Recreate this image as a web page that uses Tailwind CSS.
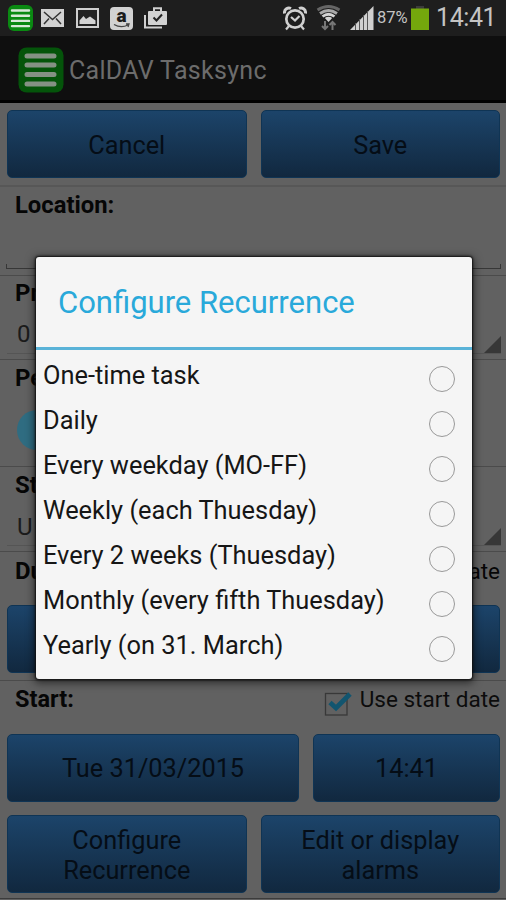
<!DOCTYPE html>
<html lang="en">
<head>
<meta charset="utf-8">
<title>CalDAV Tasksync</title>
<script src="https://cdn.jsdelivr.net/npm/@tailwindcss/browser@4"></script>
</head>
<body class="relative w-[506px] h-[900px] overflow-hidden bg-[#616161] font-['Roboto',sans-serif] text-[25.3px] text-[#060606]">
<div class="flex h-full flex-col">
  <!-- status bar -->
  <header class="flex h-9 shrink-0 items-center bg-[#1e1e1e] pl-2 pr-[10px] text-[#c4c4c4]">
    <svg class="h-[26px] w-[25px] shrink-0" viewBox="0 0 25 26"><rect width="25" height="26" rx="6" fill="#0a8a12"/><path d="M4 5.5H21M4 10.7H21M4 15.9H21M4 21.1H21" stroke="#d8e8d8" stroke-width="2.4" stroke-linecap="round"/></svg>
    <svg class="ml-2 h-[18px] w-[23px] shrink-0" viewBox="0 0 23 18"><rect width="23" height="18" fill="#d2d2d2"/><path d="M3 3L11.5 10.5L20 3M3 15L8 9.5M20 15L15 9.5" fill="none" stroke="#333" stroke-width="1.5"/></svg>
    <svg class="ml-3 h-5 w-[23px] shrink-0" viewBox="0 0 23 20"><rect x="1" y="1" width="21" height="18" fill="#222" stroke="#cfcfcf" stroke-width="2"/><path d="M3.500 16V12.500L7.500 8L10 11L14 8.500L19.500 12.500V16Z" fill="#d2d2d2"/></svg>
    <div class="relative ml-[11px] flex h-[23px] w-[23px] shrink-0 justify-center rounded-[4px] bg-[#d2d2d2]"><span class="text-[19px] leading-[17px] font-black text-[#1c1c1c]">a</span><svg class="absolute inset-0 h-[23px] w-[23px]" viewBox="0 0 23 23"><path d="M4 17.500Q11 21.500 18 18M16 17L19 17L18 20" fill="none" stroke="#444" stroke-width="1.300"/></svg></div>
    <svg class="ml-[11px] h-[22px] w-[23px] shrink-0" viewBox="0 0 23 22"><path d="M1 8V20.500H18" fill="none" stroke="#d0d0d0" stroke-width="2"/><rect x="4" y="4" width="19" height="14" rx="1" fill="#d2d2d2"/><path d="M10 5V1.200H17V5" fill="none" stroke="#d0d0d0" stroke-width="2"/><path d="M9.500 10.500L12.500 13.500L18 7.500" fill="none" stroke="#222" stroke-width="2"/></svg>
    <svg class="ml-[116px] h-[25px] w-6 shrink-0" viewBox="0 0 24 25" fill="none" stroke="#d0d0d0"><circle cx="12" cy="13" r="8.700" stroke-width="2.700"/><path d="M1.500 7.500C1 3 5 1 8 2.500M22.500 7.500C23 3 19 1 16 2.500" stroke-width="3"/><path d="M8 11L12 14.500L16.500 10M6 20L3 23.500M18 20L21 23.500" stroke-width="2.200"/></svg>
    <svg class="ml-[9px] h-[26px] w-[25px] shrink-0" viewBox="0 0 25 26" fill="none" stroke-width="2.800"><path d="M1.500 5Q12.500 -2 23.500 5" stroke="#666"/><path d="M4 8.500Q12.500 2.500 21 8.500" stroke="#aaa"/><path d="M6.500 11.500Q12.500 7 18.500 11.500" stroke="#d4d4d4"/><path d="M8.800 13Q12.500 10.500 16.200 13L12.500 17Z" fill="#d4d4d4" stroke="none"/><path d="M9 16V24M6 21L9 24L12 21M16.500 25V17M13.500 20L16.500 17L19.500 20" stroke="#777" stroke-width="2"/></svg>
    <svg class="ml-[9px] h-6 w-6 shrink-0" viewBox="0 0 24 24"><path d="M0 24L23.500 0V24Z" fill="#d0d0d0"/><path d="M5.500 17V24M9.500 13V24M13.500 9V24M17.500 5V24" stroke="#555" stroke-width="1"/></svg>
    <span class="ml-[3px] w-[31px] shrink-0 whitespace-nowrap text-[16.500px]">87%</span>
    <svg class="ml-[3px] h-6 w-[18px] shrink-0" viewBox="0 0 18 24"><path d="M5 0H13V3H5Z" fill="#3b3b3b"/><rect y="2.500" width="18" height="21.500" fill="#74a80c"/></svg>
    <span class="ml-[7px] whitespace-nowrap text-[25px] leading-9 tracking-[-0.4px]">14:41</span>
  </header>
  <!-- action bar -->
  <div class="flex h-[67px] shrink-0 items-center border-b-[3px] border-black bg-[#0f0f0f] pl-[18px] pt-1">
    <svg class="h-[46px] w-[46px]" viewBox="0 0 46 46"><rect x=".5" y=".5" width="45" height="45" rx="8" fill="#04540a"/><path d="M9 9H36M9 18H36M9 27.500H36M9 37H36" stroke="#849184" stroke-width="5" stroke-linecap="round"/></svg>
    <h1 class="ml-[5px] pt-[2px] text-[25px] tracking-[0.3px] text-[#6c6c6c]">CalDAV Tasksync</h1>
  </div>
  <main class="flex flex-col">
    <div class="flex h-[84px] gap-[14px] border-b-2 border-[#575757] pt-[7px] pr-[6px] pl-[7px]">
      <button class="h-[68px] flex-1 rounded-[5px] border border-[#0f3454] bg-linear-to-b from-[#1c446a] to-[#11283f] pt-[3px] text-[#050d16]">Cancel</button>
      <button class="h-[68px] flex-1 rounded-[5px] border border-[#0f3454] bg-linear-to-b from-[#1c446a] to-[#11283f] pt-[3px] text-[#050d16]">Save</button>
    </div>
    <section class="flex h-[89px] flex-col justify-between border-b border-[#4b4b4b] px-[6px] pb-[6px]">
      <h2 class="pl-[9px] pt-[3px] text-[23.800px] leading-[30px] font-bold">Location:</h2>
      <div class="mr-[-1px] h-[5px] border-x border-b border-[#373737]"></div>
    </section>
    <section class="flex h-[84px] flex-col border-b border-[#4b4b4b] pl-[15px] pr-[5px]">
      <h2 class="pt-[2px] text-[24px] leading-[30px] font-bold">Priority:</h2>
      <div class="ml-[-8px] mt-1 flex h-[42px] items-end justify-between border-b border-[#555] pl-[10px]"><span class="pb-[1px] text-[24px] leading-9 text-[#1b1b1b]">0</span><svg class="h-[17px] w-[17px]" viewBox="0 0 17 17"><path d="M17 0V17H0Z" fill="#373737"/></svg></div>
    </section>
    <section class="flex h-[107px] flex-col border-b border-[#4b4b4b] pl-[15px]">
      <h2 class="pt-[3px] text-[24px] leading-[30px] font-bold">Percent:</h2>
      <div class="ml-[2px] mt-[17px] size-10 rounded-full bg-[#2f6c81]"></div>
    </section>
    <section class="flex h-[85px] flex-col border-b border-[#4b4b4b] pl-[15px] pr-[5px]">
      <h2 class="pt-[3px] text-[24px] leading-[30px] font-bold">Status:</h2>
      <div class="ml-[-8px] mt-1 flex h-[42px] items-end justify-between border-b border-[#555] pl-[10px]"><span class="text-[24px] leading-9 text-[#1b1b1b]">U</span><svg class="h-[17px] w-[17px]" viewBox="0 0 17 17"><path d="M17 0V17H0Z" fill="#373737"/></svg></div>
    </section>
    <section class="h-[129px] border-b border-[#4b4b4b] pr-[6px] pl-[7px]">
      <div class="flex h-[53px] justify-between pl-2 pt-[4px] leading-[30px]"><h2 class="text-[24px] font-bold">Due:</h2><span class="text-[22.500px]">date</span></div>
      <button class="block h-[68px] w-full rounded-[5px] border border-[#0f3454] bg-linear-to-b from-[#1c446a] to-[#11283f]"></button>
    </section>
    <section class="h-[218px] border-b border-[#3b3b3b] pr-[6px] pl-[7px]">
      <div class="flex h-[53px] pl-2 pt-[3px] leading-[30px]">
        <h2 class="flex-1 text-[23.500px] font-bold">Start:</h2>
        <svg class="mt-[4px] mr-[8px] h-7 w-7" viewBox="0 0 28 28"><rect x="1.500" y="5.500" width="21.500" height="21.500" fill="none" stroke="#383838" stroke-width="1.300"/><path d="M6 14.500L12 20L26 6" fill="none" stroke="#12556f" stroke-width="4.800"/></svg>
        <span class="text-[22.500px] text-[#0c0c0c]">Use start date</span>
      </div>
      <div class="flex h-[68px] gap-[14px]">
        <button class="w-[292px] rounded-[5px] border border-[#0f3454] bg-linear-to-b from-[#1c446a] to-[#11283f] pt-[2px] text-[#050d16]">Tue 31/03/2015</button>
        <button class="flex-1 rounded-[5px] border border-[#0f3454] bg-linear-to-b from-[#1c446a] to-[#11283f] pt-[2px] text-[#050d16]">14:41</button>
      </div>
      <div class="mt-[13px] flex h-[78px] gap-[14px] leading-[30px]">
        <button class="flex-1 rounded-[5px] border border-[#0f3454] bg-linear-to-b from-[#1c446a] to-[#11283f] pt-[3px] text-[#050d16]">Configure<br>Recurrence</button>
        <button class="flex-1 rounded-[5px] border border-[#0f3454] bg-linear-to-b from-[#1c446a] to-[#11283f] pt-[3px] text-[#050d16]">Edit or display<br>alarms</button>
      </div>
    </section>
  </main>
</div>
<!-- recurrence dialog -->
<div role="dialog" class="absolute left-9 top-[257px] flex h-[422px] w-[436px] flex-col rounded-[3px] bg-[#f5f5f5] text-[#161616] shadow-[0_0_2px_1px_#111,0_2px_9px_2px_rgba(0,0,0,.55)]">
  <div class="flex h-[93px] shrink-0 items-center border-b-[3px] border-[#5ab3d8] pl-[22px] pt-[3px] text-[31px] text-[#29a9da]">Configure Recurrence</div>
  <ul class="flex flex-col pl-[7px] pr-[17px] pt-1 text-[25.400px]">
    <li class="flex h-[45px] justify-between leading-[43px]"><span>One-time task</span><i class="mt-[12px] size-[26px] rounded-full border-[1.5px] border-[#999]"></i></li>
    <li class="flex h-[45px] justify-between leading-[43px]"><span>Daily</span><i class="mt-[12px] size-[26px] rounded-full border-[1.5px] border-[#999]"></i></li>
    <li class="flex h-[45px] justify-between leading-[43px]"><span>Every weekday (MO-FF)</span><i class="mt-[12px] size-[26px] rounded-full border-[1.5px] border-[#999]"></i></li>
    <li class="flex h-[45px] justify-between leading-[43px]"><span>Weekly (each Thuesday)</span><i class="mt-[12px] size-[26px] rounded-full border-[1.5px] border-[#999]"></i></li>
    <li class="flex h-[45px] justify-between leading-[43px]"><span>Every 2 weeks (Thuesday)</span><i class="mt-[12px] size-[26px] rounded-full border-[1.5px] border-[#999]"></i></li>
    <li class="flex h-[45px] justify-between leading-[43px]"><span>Monthly (every fifth Thuesday)</span><i class="mt-[12px] size-[26px] rounded-full border-[1.5px] border-[#999]"></i></li>
    <li class="flex h-[45px] justify-between leading-[43px]"><span>Yearly (on 31. March)</span><i class="mt-[12px] size-[26px] rounded-full border-[1.5px] border-[#999]"></i></li>
  </ul>
</div>
</body>
</html>
